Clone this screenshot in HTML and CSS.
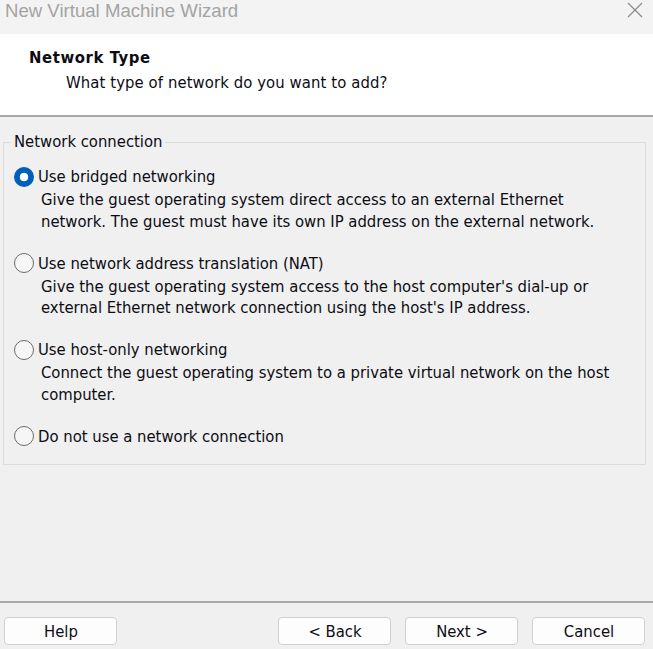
FILE: index.html
```html
<!DOCTYPE html>
<html lang="en">
<head>
<meta charset="utf-8">
<title>New Virtual Machine Wizard</title>
<link rel="stylesheet" href="styles.css">
</head>
<body>
<div class="window">
  <div class="titlebar">
    <span class="title">New Virtual Machine Wizard</span>
    <svg class="close" width="16" height="16" viewBox="0 0 16 16" aria-label="Close">
      <path d="M1 1 L15 15 M15 1 L1 15" stroke="#8c8c8c" stroke-width="1.3" fill="none"/>
    </svg>
  </div>

  <header class="page-head">
    <h1 class="page-title">Network Type</h1>
    <p class="page-sub">What type of network do you want to add?</p>
  </header>

  <main class="body">
    <fieldset class="group">
      <legend class="group-label">Network connection</legend>

      <div class="option">
        <label class="choice"><input type="radio" name="net" checked><span>Use bridged networking</span></label>
        <p class="desc">Give the guest operating system direct access to an external Ethernet network. The guest must have its own IP address on the external network.</p>
      </div>

      <div class="option">
        <label class="choice"><input type="radio" name="net"><span>Use network address translation (NAT)</span></label>
        <p class="desc">Give the guest operating system access to the host computer's dial-up or external Ethernet network connection using the host's IP address.</p>
      </div>

      <div class="option">
        <label class="choice"><input type="radio" name="net"><span>Use host-only networking</span></label>
        <p class="desc">Connect the guest operating system to a private virtual network on the host computer.</p>
      </div>

      <div class="option">
        <label class="choice"><input type="radio" name="net"><span>Do not use a network connection</span></label>
      </div>
    </fieldset>
  </main>

  <footer class="actions">
    <button class="btn btn-help" type="button">Help</button>
    <button class="btn" type="button">&lt; Back</button>
    <button class="btn" type="button">Next &gt;</button>
    <button class="btn" type="button">Cancel</button>
  </footer>
</div>
</body>
</html>
```

FILE: styles.css
```css
* {
  box-sizing: border-box;
}

html, body {
  margin: 0;
  padding: 0;
  background: #f0f0f0;
}

body {
  font-family: "DejaVu Sans Condensed", "DejaVu Sans", sans-serif;
  font-size: 16.5px;
  color: #0c0c14;
}

.window {
  display: flex;
  flex-direction: column;
  height: 100vh;
  overflow: hidden;
}

/* Title bar */
.titlebar {
  display: flex;
  align-items: flex-start;
  justify-content: space-between;
  height: 34px;
  padding: 0 10px 0 5px;
  background: #f3f3f3;
}

.title {
  font-family: "Liberation Sans", Arial, sans-serif;
  font-size: 18.6px;
  line-height: 22px;
  color: #a3a3a3;
}

.close {
  margin-top: 2px;
}

/* Page header */
.page-head {
  background: #ffffff;
  height: 83px;
  padding: 13px 0 0 29px;
  border-bottom: 2px solid #a8a8a8;
}

.page-title {
  margin: 0;
  font-size: 16.5px;
  font-weight: bold;
  letter-spacing: 0.6px;
  line-height: 22px;
}

.page-sub {
  margin: 3px 0 0 37px;
  letter-spacing: 0.1px;
  line-height: 22px;
}

/* Body */
.body {
  flex: 1;
}

.group {
  margin: 15px 7px 0 3px;
  padding: 14px 10px 17px 10px;
  border: 1px solid #dcdcdc;
  min-width: 0;
}

.group-label {
  padding: 0 3px;
  margin-left: -3px;
  line-height: 20px;
}

.option + .option {
  margin-top: 20.5px;
}

.choice {
  display: flex;
  align-items: center;
  gap: 4px;
  line-height: 21.5px;
}

.choice input {
  appearance: none;
  -webkit-appearance: none;
  width: 20px;
  height: 20px;
  margin: 0;
  border-radius: 50%;
  border: 1.5px solid #6b6b6b;
  background: #f6f6f6;
  flex: none;
}

.choice input:checked {
  border: none;
  background: radial-gradient(circle, #ffffff 0 4px, #005fb8 4.6px);
}

.desc {
  margin: 1.5px 0 0 27px;
  max-width: 585px;
  line-height: 21.5px;
}

/* Footer buttons */
.actions {
  display: flex;
  gap: 14px;
  padding: 14px 8px 4px 4px;
  border-top: 2px solid #a8a8a8;
}

.btn {
  width: 113px;
  height: 28px;
  padding: 2px 0 0 1px;
  font: inherit;
  font-size: 16.5px;
  line-height: 24px;
  color: #0c0c14;
  background: #fdfdfd;
  border: 1px solid #d0d0d0;
  border-radius: 4px;
}

.btn-help {
  margin-right: auto;
}
```
